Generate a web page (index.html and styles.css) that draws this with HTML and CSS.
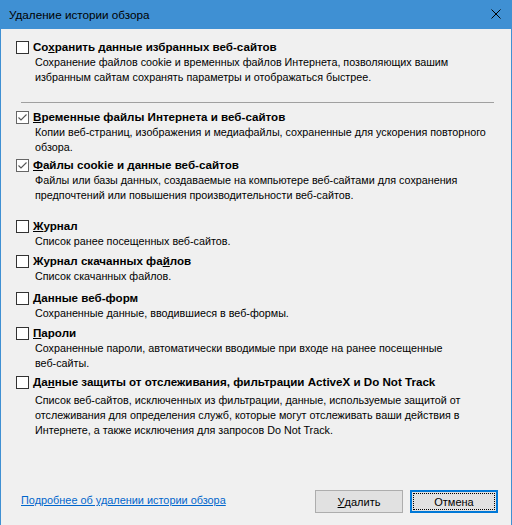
FILE: index.html
```html
<!DOCTYPE html>
<html lang="ru">
<head>
<meta charset="utf-8">
<title>Удаление истории обзора</title>
<link rel="stylesheet" href="styles.css">
</head>
<body>
<div class="window">
  <div class="titlebar">
    <span class="title">Удаление истории обзора</span>
    <svg class="close" width="10" height="10" viewBox="0 0 10 10"><path d="M0.5 0.5 L9.5 9.5 M9.5 0.5 L0.5 9.5" stroke="#000" stroke-width="1" fill="none"/></svg>
  </div>
  <div class="content">
    <div class="item i1">
      <span class="box"></span>
      <div class="text">
        <div class="label">Со<u>х</u>ранить данные избранных веб-сайтов</div>
        <div class="desc">Сохранение файлов cookie и временных файлов Интернета, позволяющих вашим<br>избранным сайтам сохранять параметры и отображаться быстрее.</div>
      </div>
    </div>
    <div class="sep"></div>
    <div class="item i2">
      <span class="box checked"><svg width="11" height="11" viewBox="0 0 11 11"><path d="M1.5 5.5 L4 8 L9.5 2.5" stroke="#555" stroke-width="1.1" fill="none"/></svg></span>
      <div class="text">
        <div class="label"><u>В</u>ременные файлы Интернета и веб-сайтов</div>
        <div class="desc">Копии веб-страниц, изображения и медиафайлы, сохраненные для ускорения повторного<br>обзора.</div>
      </div>
    </div>
    <div class="item i3">
      <span class="box checked"><svg width="11" height="11" viewBox="0 0 11 11"><path d="M1.5 5.5 L4 8 L9.5 2.5" stroke="#555" stroke-width="1.1" fill="none"/></svg></span>
      <div class="text">
        <div class="label"><u>Ф</u>айлы cookie и данные веб-сайтов</div>
        <div class="desc">Файлы или базы данных, создаваемые на компьютере веб-сайтами для сохранения<br>предпочтений или повышения производительности веб-сайтов.</div>
      </div>
    </div>
    <div class="item i4">
      <span class="box"></span>
      <div class="text">
        <div class="label"><u>Ж</u>урнал</div>
        <div class="desc">Список ранее посещенных веб-сайтов.</div>
      </div>
    </div>
    <div class="item i5">
      <span class="box"></span>
      <div class="text">
        <div class="label">Журнал скачанных фа<u>й</u>лов</div>
        <div class="desc">Список скачанных файлов.</div>
      </div>
    </div>
    <div class="item i6">
      <span class="box"></span>
      <div class="text">
        <div class="label"><u>Д</u>анные веб-форм</div>
        <div class="desc">Сохраненные данные, вводившиеся в веб-формы.</div>
      </div>
    </div>
    <div class="item i7">
      <span class="box"></span>
      <div class="text">
        <div class="label"><u>П</u>ароли</div>
        <div class="desc">Сохраненные пароли, автоматически вводимые при входе на ранее посещенные<br>веб-сайты.</div>
      </div>
    </div>
    <div class="item i8">
      <span class="box"></span>
      <div class="text">
        <div class="label">Да<u>н</u>ные защиты от отслеживания, фильтрации ActiveX и Do Not Track</div>
        <div class="desc wide">Список веб-сайтов, исключенных из фильтрации, данные, используемые защитой от<br>отслеживания для определения служб, которые могут отслеживать ваши действия в<br>Интернете, а также исключения для запросов Do Not Track.</div>
      </div>
    </div>
  </div>
  <div class="footer">
    <a class="link" href="#">Подробнее об удалении истории обзора</a>
    <div class="buttons">
      <button class="btn"><u>У</u>далить</button>
      <button class="btn default"><span class="focus">Отмена</span></button>
    </div>
  </div>
</div>
</body>
</html>
```

FILE: styles.css
```css
* { box-sizing: border-box; }
html, body { margin: 0; padding: 0; }
body {
  width: 512px;
  height: 525px;
  overflow: hidden;
  background: #f0f0f0;
  font-family: "Liberation Sans", Arial, sans-serif;
  font-size: 12px;
  color: #000;
}
.window {
  width: 512px;
  height: 525px;
  border-left: 1px solid #3f90d3;
  border-right: 1px solid #3f90d3;
  background: #f0f0f0;
  display: flex;
  flex-direction: column;
}
.titlebar {
  height: 29px;
  background: #3f90d3;
  display: flex;
  align-items: center;
  justify-content: space-between;
  padding: 0 10px 0 8px;
  flex: none;
}
.title {
  font-size: 11.7px;
  color: #000;
}
.close { display: block; margin-top: -1px; }
.content {
  padding-left: 15px;
  padding-right: 17px;
}
.item {
  display: flex;
  align-items: flex-start;
}
.box {
  width: 13px;
  height: 13px;
  border: 1px solid #333;
  background: #fff;
  flex: none;
  margin-top: 2px;
  margin-right: 4px;
  display: flex;
  align-items: center;
  justify-content: center;
}
.box.checked { border-color: #666; }
.box svg { display: block; }
.label {
  font-weight: bold;
  font-size: 11.6px;
  line-height: 16px;
  white-space: nowrap;
}
.desc {
  font-size: 10.75px;
  line-height: 15px;
  margin-left: 2px;
  white-space: nowrap;
}
.desc.wide { margin-top: 3px; }
.i1 { margin-top: 10px; }
.sep {
  height: 1px;
  background: #a0a0a0;
  margin: 17px 0 6px 5px;
}
.i3 { margin-top: 2px; }
.i4 { margin-top: 15px; }
.i5 { margin-top: 4px; }
.i6 { margin-top: 6px; }
.i7 { margin-top: 4px; }
.i8 { margin-top: 3px; }
.footer {
  margin-top: auto;
  padding: 0 13px 12px 20px;
  display: flex;
  align-items: center;
  justify-content: space-between;
}
.link {
  color: #0066cc;
  text-decoration: underline;
  font-size: 10.9px;
  margin-top: -3px;
}
.buttons {
  display: flex;
  gap: 7px;
}
.btn {
  width: 88px;
  height: 23px;
  background: #e1e1e1;
  border: 1px solid #adadad;
  font-family: "Liberation Sans", Arial, sans-serif;
  font-size: 11px;
  color: #000;
  padding: 0;
  display: flex;
  align-items: center;
  justify-content: center;
}
.btn.default {
  border: 2px solid #0078d7;
  padding: 1px;
}
.focus {
  flex: 1;
  align-self: stretch;
  display: flex;
  align-items: center;
  justify-content: center;
  border: 1px dotted #000;
}
```
